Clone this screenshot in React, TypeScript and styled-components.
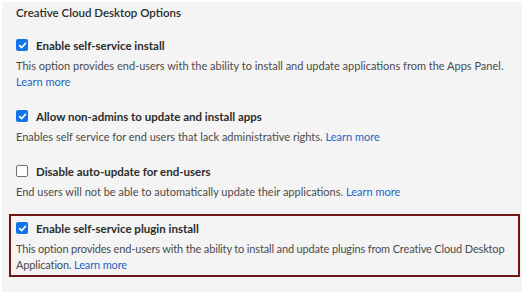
import React from 'react';
import styled, { createGlobalStyle, css } from 'styled-components';

const GlobalStyle = createGlobalStyle`
  html, body {
    margin: 0;
    padding: 0;
    background: #ffffff;
  }
  body {
    font-family: Lato, "Noto Sans", sans-serif;
  }
`;

const Page = styled.div`
  width: 522px;
  height: 292px;
  padding: 2px 0 0 2px;
  box-sizing: border-box;
  background: #ffffff;
  overflow: hidden;
`;

const Panel = styled.div`
  height: 100%;
  background: #f4f4f4;
  padding: 3px 0 0 7px;
  box-sizing: border-box;
`;

const Title = styled.h2`
  margin: 0 0 10px 7px;
  font-size: 11.5px;
  line-height: 16px;
  font-weight: 600;
  color: #2c2c2c;
`;

const OptionList = styled.div`
  display: flex;
  flex-direction: column;
  gap: 6px;
  width: 511px;
`;

const Option = styled.div<{ highlighted?: boolean }>`
  border: 2px solid transparent;
  padding: 4px 3px 4px 5px;
  ${({ highlighted }) => highlighted && css`
    border-color: #6e1616;
    margin-top: 2px;
    padding-bottom: 2px;
  `}
`;

const Row = styled.label`
  display: flex;
  align-items: center;
  gap: 8px;
  height: 16px;
`;

const Box = styled.span<{ checked?: boolean }>`
  width: 12px;
  height: 12px;
  box-sizing: border-box;
  border-radius: 2px;
  display: inline-flex;
  align-items: center;
  justify-content: center;
  flex-shrink: 0;
  ${({ checked }) => checked ? css`
    background: #1473e6;
  ` : css`
    background: #ffffff;
    border: 1.5px solid #707070;
  `}
`;

const Label = styled.span`
  font-size: 11.5px;
  font-weight: 700;
  color: #2c2c2c;
`;

const Desc = styled.p<{ tight?: boolean }>`
  margin: 5px 0 0 0;
  font-size: 11px;
  line-height: 16px;
  color: #4b4b4b;
  letter-spacing: ${({ tight }) => (tight ? '-0.15px' : '0')};
`;

const Link = styled.a`
  color: #1d64c4;
  text-decoration: none;
`;

function Checkbox({ checked }: { checked?: boolean }) {
  return (
    <Box checked={checked}>
      {checked && (
        <svg width="9" height="9" viewBox="0 0 10 10">
          <path d="M1.8 5.2 L4 7.4 L8.3 2.6" fill="none" stroke="#fff" strokeWidth="1.8" strokeLinecap="round" strokeLinejoin="round" />
        </svg>
      )}
    </Box>
  );
}

const options = [
  {
    label: 'Enable self-service install',
    checked: true,
    text: 'This option provides end-users with the ability to install and update applications from the Apps Panel.',
    linkBreak: true,
  },
  {
    label: 'Allow non-admins to update and install apps',
    checked: true,
    text: 'Enables self service for end users that lack administrative rights.',
  },
  {
    label: 'Disable auto-update for end-users',
    checked: false,
    text: 'End users will not be able to automatically update their applications.',
  },
  {
    label: 'Enable self-service plugin install',
    checked: true,
    text: 'This option provides end-users with the ability to install and update plugins from Creative Cloud Desktop Application.',
    highlighted: true,
  },
];

export default function App() {
  return (
    <>
      <GlobalStyle />
      <Page>
        <Panel>
          <Title>Creative Cloud Desktop Options</Title>
          <OptionList>
            {options.map((o) => (
              <Option key={o.label} highlighted={o.highlighted}>
                <Row>
                  <Checkbox checked={o.checked} />
                  <Label>{o.label}</Label>
                </Row>
                <Desc tight={o.highlighted}>
                  {o.text}
                  {o.linkBreak ? <br /> : ' '}
                  <Link href="#">Learn more</Link>
                </Desc>
              </Option>
            ))}
          </OptionList>
        </Panel>
      </Page>
    </>
  );
}
